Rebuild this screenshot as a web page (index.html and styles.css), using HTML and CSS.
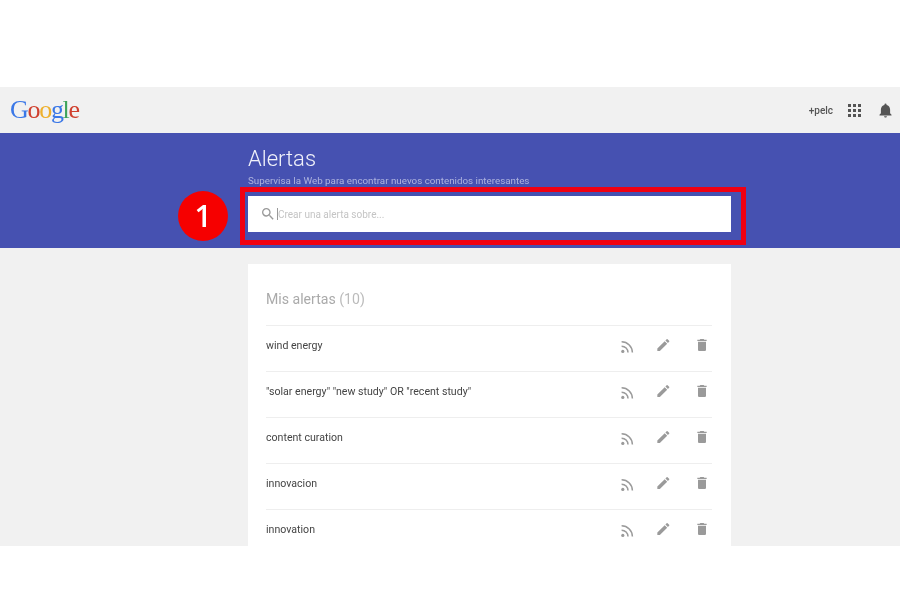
FILE: index.html
```html
<!DOCTYPE html>
<html lang="es">
  <head>
    <meta charset="UTF-8" />
    <title>Alertas</title>
    <link rel="stylesheet" href="styles.css">
  </head>
  <body>
    <svg class="sprites" width="0" height="0">
      <symbol id="rss" viewBox="0 0 20 20"><circle cx="6" cy="18" r="2"/><path class="arc" d="M4.500 11.500a8 8 0 0 1 8 8M4.500 6a13.500 13.500 0 0 1 13.500 13.500"/></symbol>
      <symbol id="pencil" viewBox="1 0 24 24"><path d="M3 17.250V21h3.750L17.810 9.940l-3.750-3.750L3 17.250zM20.710 7.040a1 1 0 0 0 0-1.410l-2.340-2.340a1 1 0 0 0-1.410 0l-1.830 1.830 3.750 3.750 1.830-1.830z"/></symbol>
      <symbol id="trash" viewBox="0 0 24 24"><path d="M6 19c0 1.100.9 2 2 2h8c1.100 0 2-.9 2-2V7H6v12zM19 4h-3.500l-1-1h-5l-1 1H5v2h14V4z"/></symbol>
    </svg>

    <div class="page">
      <header class="topbar">
        <div class="logo"><span class="blue">G</span><span class="red">o</span><span class="yellow">o</span><span class="blue">g</span><span class="green">l</span><span class="red">e</span></div>
        <div class="topbar_right">
          <span class="user">+pelc</span>
          <div class="apps"><i></i><i></i><i></i><i></i><i></i><i></i><i></i><i></i><i></i></div>
          <svg class="bell" viewBox="0 0 24 24"><path d="M12 22c1.100 0 2-.9 2-2h-4c0 1.100.9 2 2 2zm6.500-6v-5.500c0-3.100-2.100-5.600-5-6.300v-.7a1.500 1.500 0 0 0-3 0v.7c-2.900.7-5 3.200-5 6.300V16l-2 2v1h17v-1l-2-2z"/></svg>
        </div>
      </header>

      <section class="hero">
        <div class="column">
          <h1>Alertas</h1>
          <p class="subtitle">Supervisa la Web para encontrar nuevos contenidos interesantes</p>
          <div class="search">
            <svg viewBox="3 3 18 18"><path d="M15.500 14h-.79l-.28-.27A6.470 6.470 0 0 0 16 9.500 6.500 6.500 0 1 0 9.500 16c1.610 0 3.090-.59 4.230-1.570l.27.28v.79l5 4.990L20.490 19l-4.990-5zm-6 0C7.010 14 5 11.990 5 9.500S7.010 5 9.500 5 14 7.010 14 9.500 11.990 14 9.500 14z"/></svg>
            <span class="caret"></span>
            <span class="placeholder">Crear una alerta sobre...</span>
          </div>
        </div>
        <div class="callout"></div>
        <div class="badge">1</div>
      </section>

      <main class="content">
        <section class="card">
          <h2>Mis alertas <span>(10)</span></h2>
          <ul class="alerts">
            <li>
              <span>wind energy</span>
              <div class="actions">
                <svg><use href="#rss"/></svg><svg><use href="#pencil"/></svg><svg><use href="#trash"/></svg>
              </div>
            </li>
            <li>
              <span>"solar energy" "new study" OR "recent study"</span>
              <div class="actions">
                <svg><use href="#rss"/></svg><svg><use href="#pencil"/></svg><svg><use href="#trash"/></svg>
              </div>
            </li>
            <li>
              <span>content curation</span>
              <div class="actions">
                <svg><use href="#rss"/></svg><svg><use href="#pencil"/></svg><svg><use href="#trash"/></svg>
              </div>
            </li>
            <li>
              <span>innovacion</span>
              <div class="actions">
                <svg><use href="#rss"/></svg><svg><use href="#pencil"/></svg><svg><use href="#trash"/></svg>
              </div>
            </li>
            <li>
              <span>innovation</span>
              <div class="actions">
                <svg><use href="#rss"/></svg><svg><use href="#pencil"/></svg><svg><use href="#trash"/></svg>
              </div>
            </li>
          </ul>
        </section>
      </main>
    </div>
  </body>
</html>
```

FILE: styles.css
```css
* {
  box-sizing: border-box;
  margin: 0;
  padding: 0;
}

body {
  background-color: #fff;
  font-family: "Roboto", "Liberation Sans", sans-serif;
  color: #444;
}

.sprites {
  position: absolute;
}

/* the reference is a soft, upscaled capture */
.page {
  margin-top: 87px;
  height: 459px;
  overflow: hidden;
  background-color: #f1f1f1;
  filter: blur(0.45px);
}

.topbar {
  height: 46px;
  display: flex;
  justify-content: space-between;
  align-items: center;
  padding: 0 6px 0 10px;
}

.logo {
  font-family: "Liberation Serif", serif;
  font-size: 26px;
  letter-spacing: -1.3px;
  line-height: 46px;
}

.blue { color: #3b78e7; }
.red { color: #d0402f; }
.yellow { color: #eeb02c; }
.green { color: #3da35a; }

.topbar_right {
  display: flex;
  align-items: center;
}

.user {
  font-size: 10px;
  font-weight: 500;
  color: #555;
  margin-right: 15px;
}

.apps {
  display: grid;
  grid-template-columns: repeat(3, 3px);
  gap: 2px;
  margin-right: 16px;
}

.apps i {
  width: 3px;
  height: 3px;
  background-color: #555;
}

.bell {
  width: 17px;
  height: 19px;
  fill: #555;
}

.hero {
  position: relative;
  height: 115px;
  background-color: #4651b1;
  padding-left: 248px;
}

.column {
  width: 483px;
}

.hero h1 {
  font-size: 22px;
  font-weight: 300;
  color: #f1f2fa;
  line-height: 27px;
  padding-top: 12px;
  height: 39px;
}

.subtitle {
  font-size: 9.800px;
  color: #aeb3de;
  line-height: 14px;
  padding-top: 2px;
  height: 24px;
}

.search {
  height: 36px;
  background-color: #fff;
  display: flex;
  align-items: center;
  padding-left: 14px;
}

.search svg {
  width: 12px;
  height: 12px;
  fill: #999;
  margin-right: 3px;
}

.caret {
  width: 1px;
  height: 12px;
  background-color: #999;
}

.placeholder {
  font-size: 10px;
  color: #c4c4c4;
}

.callout {
  position: absolute;
  left: 240px;
  top: 54px;
  width: 506px;
  height: 58px;
  border: 5px solid #f00012;
}

.badge {
  position: absolute;
  left: 178px;
  top: 58px;
  width: 50px;
  height: 50px;
  border-radius: 50%;
  background-color: #f60000;
  color: #fff;
  font-family: "Open Sans", sans-serif;
  font-size: 30px;
  font-weight: 600;
  line-height: 50px;
  text-align: center;
}

.content {
  padding: 16px 169px 0 248px;
}

.card {
  background-color: #fff;
  padding: 0 19px 0 18px;
  height: 300px;
}

.card h2 {
  height: 61px;
  padding-top: 26px;
  font-size: 14.100px;
  font-weight: 400;
  line-height: 18px;
  color: #aaa;
}

.card h2 span {
  color: #bbb;
}

.alerts {
  list-style: none;
}

.alerts li {
  height: 46px;
  border-top: 1px solid #eee;
  display: flex;
  justify-content: space-between;
  align-items: center;
  padding-bottom: 6px;
  font-size: 10.600px;
  color: #444;
}

.actions {
  display: flex;
  gap: 22px;
  padding-right: 2px;
  margin-bottom: 2px;
}

.actions svg {
  width: 16px;
  height: 16px;
  fill: #9a9a9a;
}

.arc {
  fill: none;
  stroke: #9a9a9a;
  stroke-width: 1.900px;
}
```
